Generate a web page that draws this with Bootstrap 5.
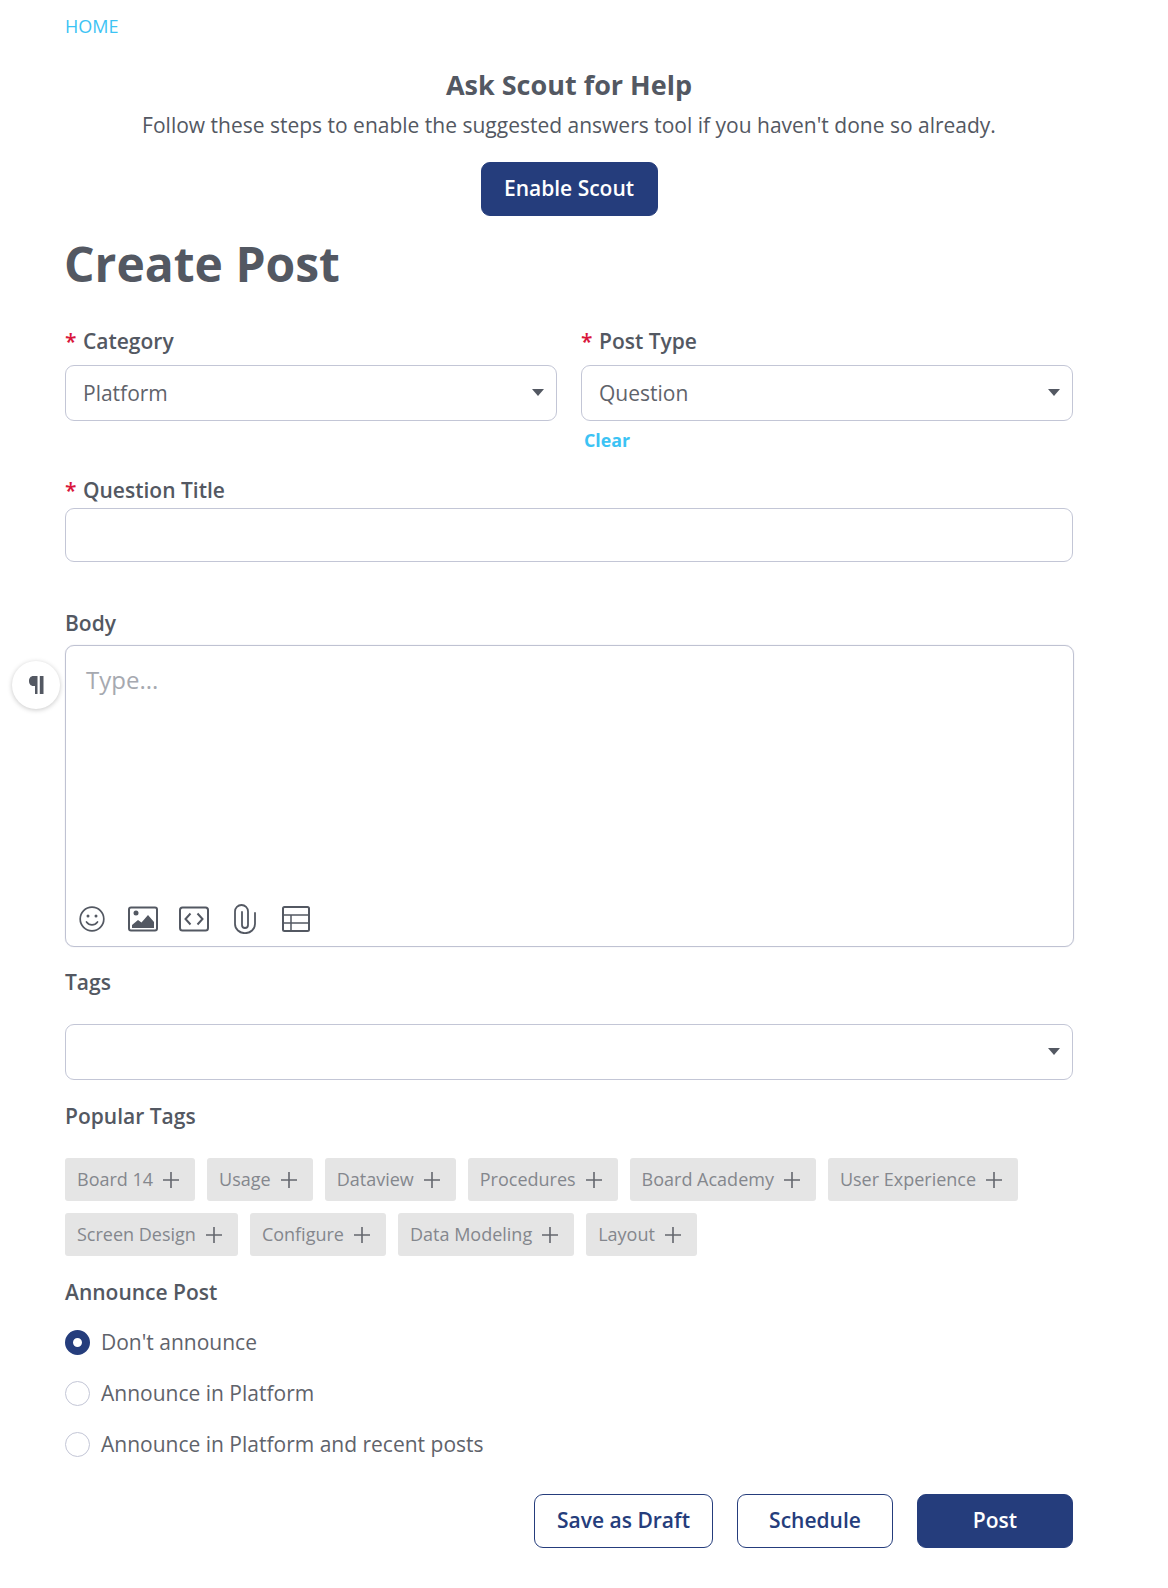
<!doctype html>
<html lang="en">
<head>
<meta charset="utf-8">
<title>Create Post</title>
<link href="https://cdn.jsdelivr.net/npm/bootstrap@5.3.0/dist/css/bootstrap.min.css" rel="stylesheet">
<style>
body{font-family:"Open Sans","Liberation Sans",sans-serif;color:#535862;background:#fff;font-size:20px}
.pg{padding:0 95px 40px 65px;position:relative}
.home{display:block;font-size:18px;line-height:24px;color:#3cc3f4;text-decoration:none;padding-top:14px}
.scout{text-align:center;margin-top:29px}
.scout h2{font-size:27px;font-weight:700;line-height:36px;margin:0;color:#535862}
.scout p{font-size:21px;line-height:28px;margin:8px 0 0}
.navy{background:#253d7c;color:#fff;border:1px solid #253d7c;border-radius:9px;font-size:21px;font-weight:600;height:54px;padding:0 22px}
.navy:hover{background:#253d7c;color:#fff}
.ghost{background:#fff;color:#253d7c;border:1px solid #253d7c;border-radius:9px;font-size:21px;font-weight:600;height:54px;padding:0}
.scout .navy{margin-top:23px;width:177px;padding:0}
h1.ttl{font-size:48px;font-weight:700;line-height:64px;margin:16px 0 0 -1px;color:#535862}
.lbl{font-size:21px;font-weight:600;line-height:28px;margin:0;display:block;color:#535862}
.req{color:#d9163c;margin-right:1px}
.row.gx{--bs-gutter-x:24px;margin-top:31px}
.fld{height:56px;border:1px solid #c3c6d6;border-radius:9px;margin-top:10px;display:flex;align-items:center;padding:2px 17px 0;position:relative;font-size:21px;color:#5f636b;background:#fff}
.fld.thin{height:54px;margin-top:4px}
.caret{position:absolute;right:12px;top:23px;width:0;height:0;border-left:6.5px solid transparent;border-right:6.5px solid transparent;border-top:7px solid #535862}
.clr{display:block;font-size:17.8px;font-weight:700;color:#3cc3f4;line-height:24px;margin:7px 0 0 3px;text-decoration:none}
.ed-wrap{position:relative;margin-top:8px}
.ed{height:302px;border:1px solid #bfc2d2;border-radius:9px;padding:18px 20px 12px;display:flex;flex-direction:column;justify-content:space-between;width:1009px;box-shadow:0 0 1px #bfc2d2}
.ph{font-size:24px;line-height:32px;color:#a6a9b0;margin:0}
.tools{display:flex;gap:21px;margin-left:-9px;align-items:center}
.tools svg{display:block}
.pil{position:absolute;left:-53px;top:16px;width:48px;height:48px;border-radius:50%;background:#fff;box-shadow:0 1px 5px rgba(0,0,0,.22);display:flex;align-items:center;justify-content:center}
.tgs{display:flex;flex-wrap:wrap;gap:12px;margin-top:28px}
.tg{height:43px;background:#e5e5e5;border-radius:3px;padding:0 15px 0 12px;display:flex;align-items:center;gap:9px;font-size:18px;color:#84878d}
.opt{display:flex;align-items:center;height:28px;padding-top:2px;font-size:21px;color:#5f636b;margin:0}
.dot{width:25px;height:25px;border-radius:50%;border:1px solid #c3c6d6;margin:-2px 11px 0 0;flex:none;background:#fff}
.dot.on{border:8px solid #253d7c}
.opts{gap:23px;margin-top:22px}
.acts{display:flex;justify-content:flex-end;gap:24px;margin-top:36px}
.w-draft{width:179px}
.w-btn{width:156px}
.sp-q{margin-top:24px}
.sp-body{margin-top:47px}
.sp-tags{margin-top:21px}
.fld.sp-tagsel{margin-top:28px}
.sp-pop{margin-top:22px}
.sp-ann{margin-top:22px}
</style>
</head>
<body>
<div class="pg">
  <a class="home" href="#">HOME</a>
  <div class="scout">
    <h2>Ask Scout for Help</h2>
    <p>Follow these steps to enable the suggested answers tool if you haven't done so already.</p>
    <button class="btn navy" type="button">Enable Scout</button>
  </div>
  <h1 class="ttl">Create Post</h1>

  <div class="row gx">
    <div class="col-6">
      <label class="lbl"><span class="req">*</span> Category</label>
      <div class="fld">Platform<span class="caret"></span></div>
    </div>
    <div class="col-6">
      <label class="lbl"><span class="req">*</span> Post Type</label>
      <div class="fld">Question<span class="caret"></span></div>
      <a class="clr" href="#">Clear</a>
    </div>
  </div>

  <label class="lbl sp-q"><span class="req">*</span> Question Title</label>
  <div class="fld thin"></div>

  <label class="lbl sp-body">Body</label>
  <div class="ed-wrap">
    <span class="pil">
      <svg width="15" height="18" viewBox="0 0 15 18"><path d="M8.500 0H4.500C1.500 0 0 2.300 0 5s1.500 5 4.500 5H6v8h2.500z" fill="#535862"/><rect x="10.800" y="0" width="3.700" height="18" fill="#535862"/></svg>
    </span>
    <div class="ed">
      <p class="ph">Type...</p>
      <div class="tools">
        <svg width="30" height="30" viewBox="0 0 30 30" fill="none" stroke="#535862" stroke-width="1.700"><circle cx="15" cy="15" r="11.800"/><circle cx="11" cy="12" r="1.500" fill="#535862" stroke="none"/><circle cx="19" cy="12" r="1.500" fill="#535862" stroke="none"/><path d="M9.500 18c3 3.800 8 3.800 11 0" stroke-linecap="round"/></svg>
        <svg width="30" height="30" viewBox="0 0 30 30"><rect x="1" y="3.500" width="28" height="23" rx="2" fill="none" stroke="#535862" stroke-width="2"/><circle cx="8" cy="9" r="2.500" fill="#535862"/><path d="M4 24v-3l6-5 3.500 2.500L20 11l6 7v6z" fill="#535862"/></svg>
        <svg width="30" height="30" viewBox="0 0 30 30" fill="none" stroke="#535862" stroke-width="2"><rect x="1" y="3.500" width="28" height="23" rx="2.500"/><path d="M11.500 9.500l-5 5.500 5 5.500M18.500 9.500l5 5.500-5 5.500"/></svg>
        <svg width="30" height="30" viewBox="0 0 30 30" fill="none" stroke="#535862" stroke-width="1.800" stroke-linecap="round"><path d="M25 9v11a10 9.200 0 0 1-20 0V7.500a6.500 6.500 0 0 1 13 0V21a3 3 0 0 1-6 0V8"/></svg>
        <svg width="30" height="30" viewBox="0 0 30 30" fill="none" stroke="#535862" stroke-width="2"><rect x="2" y="3" width="26" height="24" rx="1.500"/><path d="M2 11h26M2 19h26M10 11v16" stroke-width="1.500"/></svg>
      </div>
    </div>
  </div>

  <label class="lbl sp-tags">Tags</label>
  <div class="fld sp-tagsel"><span class="caret"></span></div>

  <label class="lbl sp-pop">Popular Tags</label>
  <div class="tgs">
    <span class="tg">Board 14 <svg width="18" height="18" viewBox="0 0 18 18"><path d="M9 1v16M1 9h16" stroke="#64676e" stroke-width="1.600"/></svg></span>
    <span class="tg">Usage <svg width="18" height="18" viewBox="0 0 18 18"><path d="M9 1v16M1 9h16" stroke="#64676e" stroke-width="1.600"/></svg></span>
    <span class="tg">Dataview <svg width="18" height="18" viewBox="0 0 18 18"><path d="M9 1v16M1 9h16" stroke="#64676e" stroke-width="1.600"/></svg></span>
    <span class="tg">Procedures <svg width="18" height="18" viewBox="0 0 18 18"><path d="M9 1v16M1 9h16" stroke="#64676e" stroke-width="1.600"/></svg></span>
    <span class="tg">Board Academy <svg width="18" height="18" viewBox="0 0 18 18"><path d="M9 1v16M1 9h16" stroke="#64676e" stroke-width="1.600"/></svg></span>
    <span class="tg">User Experience <svg width="18" height="18" viewBox="0 0 18 18"><path d="M9 1v16M1 9h16" stroke="#64676e" stroke-width="1.600"/></svg></span>
    <span class="tg">Screen Design <svg width="18" height="18" viewBox="0 0 18 18"><path d="M9 1v16M1 9h16" stroke="#64676e" stroke-width="1.600"/></svg></span>
    <span class="tg">Configure <svg width="18" height="18" viewBox="0 0 18 18"><path d="M9 1v16M1 9h16" stroke="#64676e" stroke-width="1.600"/></svg></span>
    <span class="tg">Data Modeling <svg width="18" height="18" viewBox="0 0 18 18"><path d="M9 1v16M1 9h16" stroke="#64676e" stroke-width="1.600"/></svg></span>
    <span class="tg">Layout <svg width="18" height="18" viewBox="0 0 18 18"><path d="M9 1v16M1 9h16" stroke="#64676e" stroke-width="1.600"/></svg></span>
  </div>

  <label class="lbl sp-ann">Announce Post</label>
  <div class="d-flex flex-column opts">
    <label class="opt"><span class="dot on"></span>Don't announce</label>
    <label class="opt"><span class="dot"></span>Announce in Platform</label>
    <label class="opt"><span class="dot"></span>Announce in Platform and recent posts</label>
  </div>

  <div class="acts">
    <button class="btn ghost w-draft" type="button">Save as Draft</button>
    <button class="btn ghost w-btn" type="button">Schedule</button>
    <button class="btn navy w-btn p-0" type="button">Post</button>
  </div>
</div>
<script src="https://cdn.jsdelivr.net/npm/bootstrap@5.3.0/dist/js/bootstrap.bundle.min.js"></script>
</body>
</html>
